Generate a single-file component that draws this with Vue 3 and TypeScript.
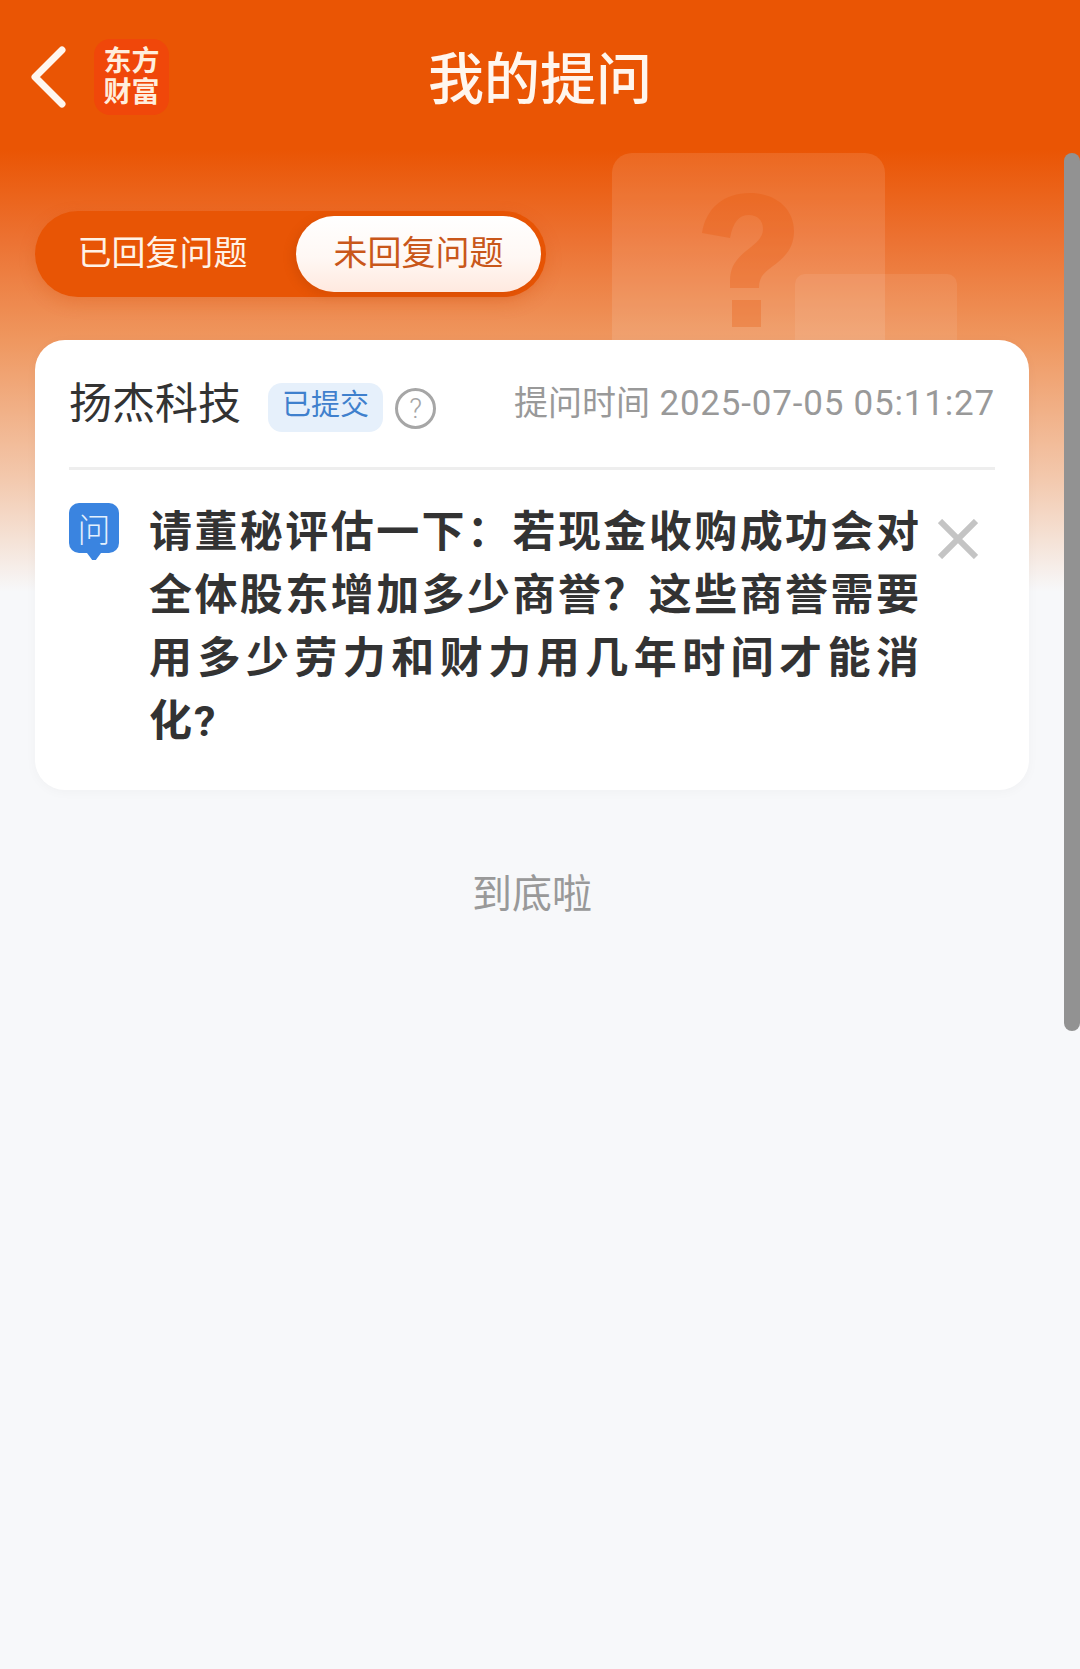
<template>
  <div class="page">
    <!-- 背景装饰 -->
    <div class="deco">
      <div class="deco-big">
        <svg class="deco-mark" viewBox="0 0 92 134">
          <path d="M0 40C4 15 22 0 48 0c26 0 44 16 44 38 0 17-9 26-21 35-10 7-14 12-14 22H28v-7c0-13 5-21 16-30 10-8 17-13 17-22 0-9-6-14-14-14-10 0-16 7-19 23z" />
          <rect x="30" y="107" width="29" height="27" />
        </svg>
      </div>
      <div class="deco-small"></div>
    </div>

    <header class="nav">
      <svg class="back" viewBox="0 0 36 62" fill="none">
        <path d="M32 4 5 31l27 27" stroke="#fff6ee" stroke-width="7" stroke-linecap="round" stroke-linejoin="round" />
      </svg>
      <div class="logo">
        <span>东方</span>
        <span>财富</span>
      </div>
      <h1 class="title">我的提问</h1>
    </header>

    <div class="tabs">
      <div
        v-for="(tab, i) in tabs"
        :key="tab"
        class="tab"
        :class="{ active: activeTab === i }"
        @click="activeTab = i"
      >
        {{ tab }}
      </div>
    </div>

    <section class="card">
      <div class="card-head">
        <span class="company">扬杰科技</span>
        <span class="status">已提交</span>
        <span class="help">?</span>
        <span class="time"><span class="time-label">提问时间</span> 2025-07-05 05:11:27</span>
      </div>
      <div class="card-body">
        <div class="ask-icon">
          <span>问</span>
        </div>
        <p class="question">{{ question }}</p>
        <svg class="close" viewBox="0 0 40 40" fill="none">
          <path d="M2 2l36 36M38 2 2 38" stroke="#c4c4c4" stroke-width="6" />
        </svg>
      </div>
    </section>

    <div class="bottom">到底啦</div>

    <div class="scrollbar"></div>
  </div>
</template>

<script setup lang="ts">
import { ref } from 'vue'

const tabs = ['已回复问题', '未回复问题']
const activeTab = ref(1)
const question =
  '请董秘评估一下：若现金收购成功会对全体股东增加多少商誉？这些商誉需要用多少劳力和财力用几年时间才能消化?'
</script>

<style>
html,
body {
  margin: 0;
  background: #f7f8fa;
}
</style>

<style scoped>
.page {
  position: relative;
  width: 1080px;
  height: 1669px;
  overflow: hidden;
  font-family: Roboto, "Noto Sans CJK SC", sans-serif;
  background: linear-gradient(
    180deg,
    #ea5504 0,
    #ea5504 150px,
    #ec7232 240px,
    #ef975f 340px,
    #f3c9ae 480px,
    #f5e2d6 540px,
    #f7f8fa 592px
  );
}

.deco {
  position: absolute;
  top: 153px;
  left: 612px;
}

.deco-big {
  position: absolute;
  left: 0;
  top: 0;
  width: 273px;
  height: 240px;
  border-radius: 20px 20px 0 0;
  background: rgba(255, 255, 255, 0.11);
}

.deco-mark {
  position: absolute;
  left: 90px;
  top: 40px;
  width: 92px;
  height: 134px;
  fill: #e85000;
  opacity: 0.26;
}

.deco-small {
  position: absolute;
  left: 183px;
  top: 121px;
  width: 162px;
  height: 120px;
  border-radius: 10px 10px 0 0;
  background: rgba(255, 255, 255, 0.08);
}

.nav {
  position: relative;
  display: flex;
  align-items: center;
  height: 154px;
  padding-left: 30px;
  box-sizing: border-box;
}

.back {
  width: 36px;
  height: 62px;
}

.logo {
  display: flex;
  flex-direction: column;
  align-items: center;
  justify-content: center;
  width: 75px;
  height: 76px;
  margin-left: 28px;
  border-radius: 16px;
  background: #f0470a;
  color: #ffeedd;
  font-size: 28px;
  font-weight: 700;
  line-height: 31px;
}

.title {
  position: absolute;
  left: 0;
  right: 0;
  top: 42px;
  margin: 0;
  text-align: center;
  color: #fff6ee;
  font-size: 56px;
  font-weight: 500;
  line-height: 76px;
}

.tabs {
  position: relative;
  display: flex;
  justify-content: space-between;
  width: 511px;
  height: 86px;
  margin: 57px 0 0 35px;
  padding: 5px;
  box-sizing: border-box;
  border-radius: 43px;
  background: #e85505;
  box-shadow: 0 6px 16px rgba(214, 80, 10, 0.25);
}

.tab {
  display: flex;
  align-items: center;
  justify-content: center;
  width: 245px;
  padding-bottom: 8px;
  box-sizing: border-box;
  border-radius: 38px;
  color: #fff2e6;
  font-size: 34px;
  cursor: pointer;
}

.tab.active {
  color: #c9571a;
  background: linear-gradient(180deg, #ffffff 0, #fff8f4 55%, #ffe9df 100%);
  box-shadow: -4px 3px 8px rgba(170, 60, 0, 0.25);
}

.card {
  position: relative;
  width: 994px;
  height: 450px;
  margin: 43px 0 0 35px;
  padding: 0 34px;
  box-sizing: border-box;
  border-radius: 30px;
  background: #fff;
  box-shadow: 0 2px 12px rgba(0, 0, 0, 0.03);
}

.card-head {
  display: flex;
  align-items: center;
  height: 130px;
  box-sizing: border-box;
  border-bottom: 3px solid #eeeeee;
}

.company {
  color: #333;
  font-size: 43px;
  line-height: 60px;
}

.status {
  margin-left: 27px;
  margin-top: 8px;
  width: 115px;
  height: 49px;
  border-radius: 14px;
  background: #e6f0fb;
  color: #3f80cd;
  font-size: 29px;
  line-height: 45px;
  text-align: center;
}

.help {
  width: 35px;
  height: 35px;
  margin-left: 12px;
  margin-top: 10px;
  border: 3px solid #a6a6a6;
  border-radius: 50%;
  color: #a6a6a6;
  font-size: 28px;
  font-weight: 300;
  line-height: 35px;
  text-align: center;
}

.time {
  margin-left: auto;
  margin-top: -6px;
  color: #999;
  font-size: 35px;
  letter-spacing: 0.8px;
  white-space: nowrap;
}

.time-label {
  font-size: 34px;
  letter-spacing: 0;
}

.card-body {
  display: flex;
  align-items: flex-start;
  padding-top: 30px;
}

.ask-icon {
  position: relative;
  display: flex;
  align-items: center;
  justify-content: center;
  flex: none;
  width: 50px;
  height: 50px;
  margin-top: 3px;
  border-radius: 10px;
  background: #3a84e0;
  color: #e4f0fd;
  font-size: 33px;
  font-weight: 300;
}

.ask-icon::after {
  content: '';
  position: absolute;
  left: 16px;
  bottom: -7px;
  width: 18px;
  height: 14px;
  background: #3a84e0;
  clip-path: polygon(0 0, 100% 0, 100% 30%, 60% 100%, 40% 100%, 0 30%);
}

.question {
  width: 772px;
  margin: 1px 0 0 30px;
  color: #333;
  font-size: 43px;
  font-weight: 700;
  line-height: 63px;
  letter-spacing: 2px;
  text-align: justify;
}

.close {
  flex: none;
  width: 40px;
  height: 40px;
  margin: 19px 0 0 17px;
}

.bottom {
  margin: 70px 0 0;
  width: 1064px;
  text-align: center;
  color: #999;
  font-size: 40px;
  line-height: 70px;
}

.scrollbar {
  position: absolute;
  top: 153px;
  right: 0;
  width: 16px;
  height: 878px;
  border-radius: 8px;
  background: #929292;
}
</style>
